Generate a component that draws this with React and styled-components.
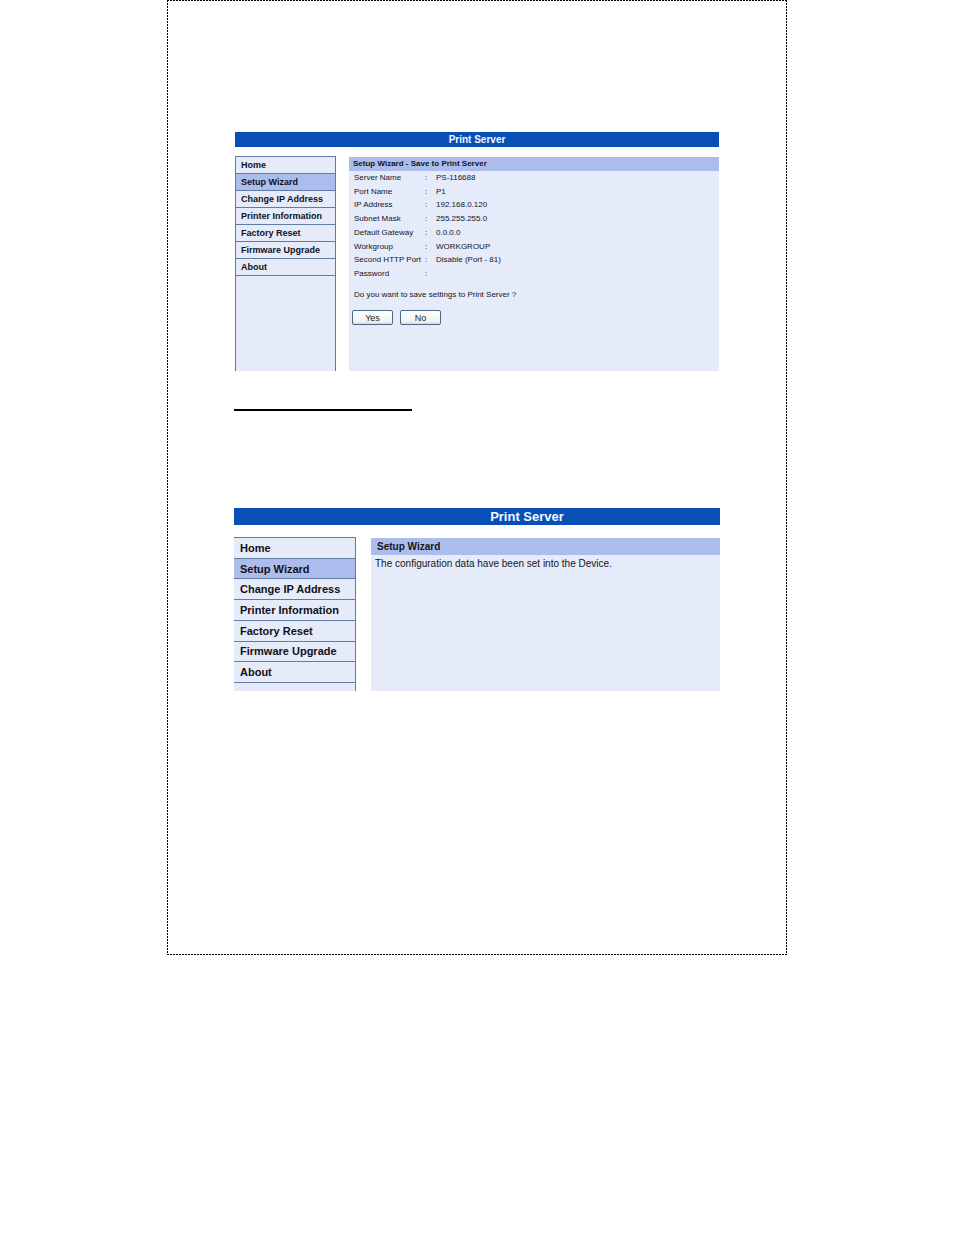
import React from 'react'
import styled, { createGlobalStyle } from 'styled-components'

const menu = [
  'Home',
  'Setup Wizard',
  'Change IP Address',
  'Printer Information',
  'Factory Reset',
  'Firmware Upgrade',
  'About',
]

const settings = [
  { name: 'Server Name', value: 'PS-116688' },
  { name: 'Port Name', value: 'P1' },
  { name: 'IP Address', value: '192.168.0.120' },
  { name: 'Subnet Mask', value: '255.255.255.0' },
  { name: 'Default Gateway', value: '0.0.0.0' },
  { name: 'Workgroup', value: 'WORKGROUP' },
  { name: 'Second HTTP Port', value: 'Disable (Port - 81)' },
  { name: 'Password', value: '' },
]

const Menu = ({ large }) => {
  return (
    <Sidebar $large={large}>
      <MenuList $large={large}>
        {menu.map((item) => (
          <MenuItem key={item} $large={large} $active={item === 'Setup Wizard'}>
            <a href="#">{item}</a>
          </MenuItem>
        ))}
      </MenuList>
    </Sidebar>
  )
}

const App = () => {
  return (
    <>
      <GlobalStyle />
      <Page>
        <Screen>
          <Banner>Print Server</Banner>
          <Columns>
            <Menu />
            <Content>
              <Heading>Setup Wizard - Save to Print Server</Heading>
              <Settings>
                <tbody>
                  {settings.map((row) => (
                    <tr key={row.name}>
                      <th scope="row">{row.name}</th>
                      <td className="colon">:</td>
                      <td>{row.value}</td>
                    </tr>
                  ))}
                </tbody>
              </Settings>
              <Question>Do you want to save settings to Print Server ?</Question>
              <Buttons>
                <Button type="button">Yes</Button>
                <Button type="button">No</Button>
              </Buttons>
            </Content>
          </Columns>
        </Screen>

        <Rule />

        <Screen $large>
          <Banner $large>Print Server</Banner>
          <Columns $large>
            <Menu large />
            <Content $large>
              <Heading $large>Setup Wizard</Heading>
              <Message>The configuration data have been set into the Device.</Message>
            </Content>
          </Columns>
        </Screen>
      </Page>
    </>
  )
}

export default App

const GlobalStyle = createGlobalStyle`
* {
  box-sizing: border-box;
}
body {
  margin: 0;
  background: #ffffff;
  color: #14141c;
  font-family: "Liberation Sans", Arial, sans-serif;
}
`

/* fine dashed outline, 2px on and 1px off */
const Page = styled.main`
max-width: 620px;
margin: 0 auto;
padding: 132px 67px 264px;
background:
  repeating-linear-gradient(90deg, #000000 0 2px, transparent 2px 3px) top / 100% 1px no-repeat,
  repeating-linear-gradient(90deg, #000000 0 2px, transparent 2px 3px) bottom / 100% 1px no-repeat,
  repeating-linear-gradient(180deg, #000000 0 2px, transparent 2px 3px) left / 1px 100% no-repeat,
  repeating-linear-gradient(180deg, #000000 0 2px, transparent 2px 3px) right / 1px 100% no-repeat;
`

const Screen = styled.section`
margin: ${({ $large }) => ($large ? '0' : '0 1px')};
`

const Banner = styled.h1`
margin: 0;
padding-left: ${({ $large }) => ($large ? '100px' : '0')};
background: #0850b6;
color: #f4f8ff;
text-align: center;
font-size: ${({ $large }) => ($large ? '13px' : '10px')};
line-height: ${({ $large }) => ($large ? '17px' : '15px')};
font-weight: 700;
`

const Columns = styled.div`
display: flex;
gap: ${({ $large }) => ($large ? '15px' : '13px')};
min-height: ${({ $large }) => ($large ? '154px' : '215px')};
margin-top: ${({ $large }) => ($large ? '12px' : '9px')};
`

const Sidebar = styled.nav`
flex: none;
width: ${({ $large }) => ($large ? '122px' : '101px')};
background: #e6ebf9;
border: 1px solid #5f7ba6;
border-bottom: none;
border-left-width: ${({ $large }) => ($large ? '0' : '1px')};
`

const MenuList = styled.ul`
display: grid;
grid-auto-rows: 1fr;
height: ${({ $large }) => ($large ? '145px' : '119px')};
margin: 0;
padding: 0;
list-style: none;
`

const MenuItem = styled.li`
display: flex;
align-items: center;
padding-left: ${({ $large }) => ($large ? '6px' : '5px')};
border-bottom: 1px solid #5f7ba6;
background: ${({ $active }) => ($active ? '#acbded' : 'transparent')};

a {
  color: #101018;
  font-size: ${({ $large }) => ($large ? '11px' : '9px')};
  font-weight: 700;
  text-decoration: none;
  white-space: nowrap;
}
`

const Content = styled.div`
flex: 1;
margin-top: 1px;
background: #e6ebf9;
`

const Heading = styled.h2`
margin: 0;
padding-left: ${({ $large }) => ($large ? '6px' : '4px')};
background: #acbded;
font-size: ${({ $large }) => ($large ? '10px' : '8px')};
line-height: ${({ $large }) => ($large ? '17px' : '14px')};
font-weight: 700;
`

const Settings = styled.table`
height: 110px;
margin-left: 5px;
border-collapse: collapse;
font-size: 8px;
line-height: 10px;

th, td {
  padding: 0;
  font-weight: 400;
  text-align: left;
  white-space: nowrap;
}
th {
  width: 71px;
}
.colon {
  width: 11px;
}
`

const Question = styled.p`
margin: 9px 0 0;
padding-left: 5px;
font-size: 8px;
line-height: 10px;
`

const Buttons = styled.div`
display: flex;
gap: 7px;
margin-top: 10px;
padding-left: 3px;
`

const Button = styled.button`
width: 41px;
height: 15px;
padding: 0;
border: 1px solid #45688c;
border-radius: 2px;
background: linear-gradient(#ffffff, #f3f3ee 80%, #dcd8cc);
color: #1c1c24;
font-family: inherit;
font-size: 9px;
line-height: 12px;
`

const Rule = styled.hr`
width: 178px;
height: 2px;
margin: 38px 0 97px;
border: none;
background: #000000;
`

const Message = styled.p`
margin: 0;
padding-left: 4px;
font-size: 10px;
line-height: 17px;
`
